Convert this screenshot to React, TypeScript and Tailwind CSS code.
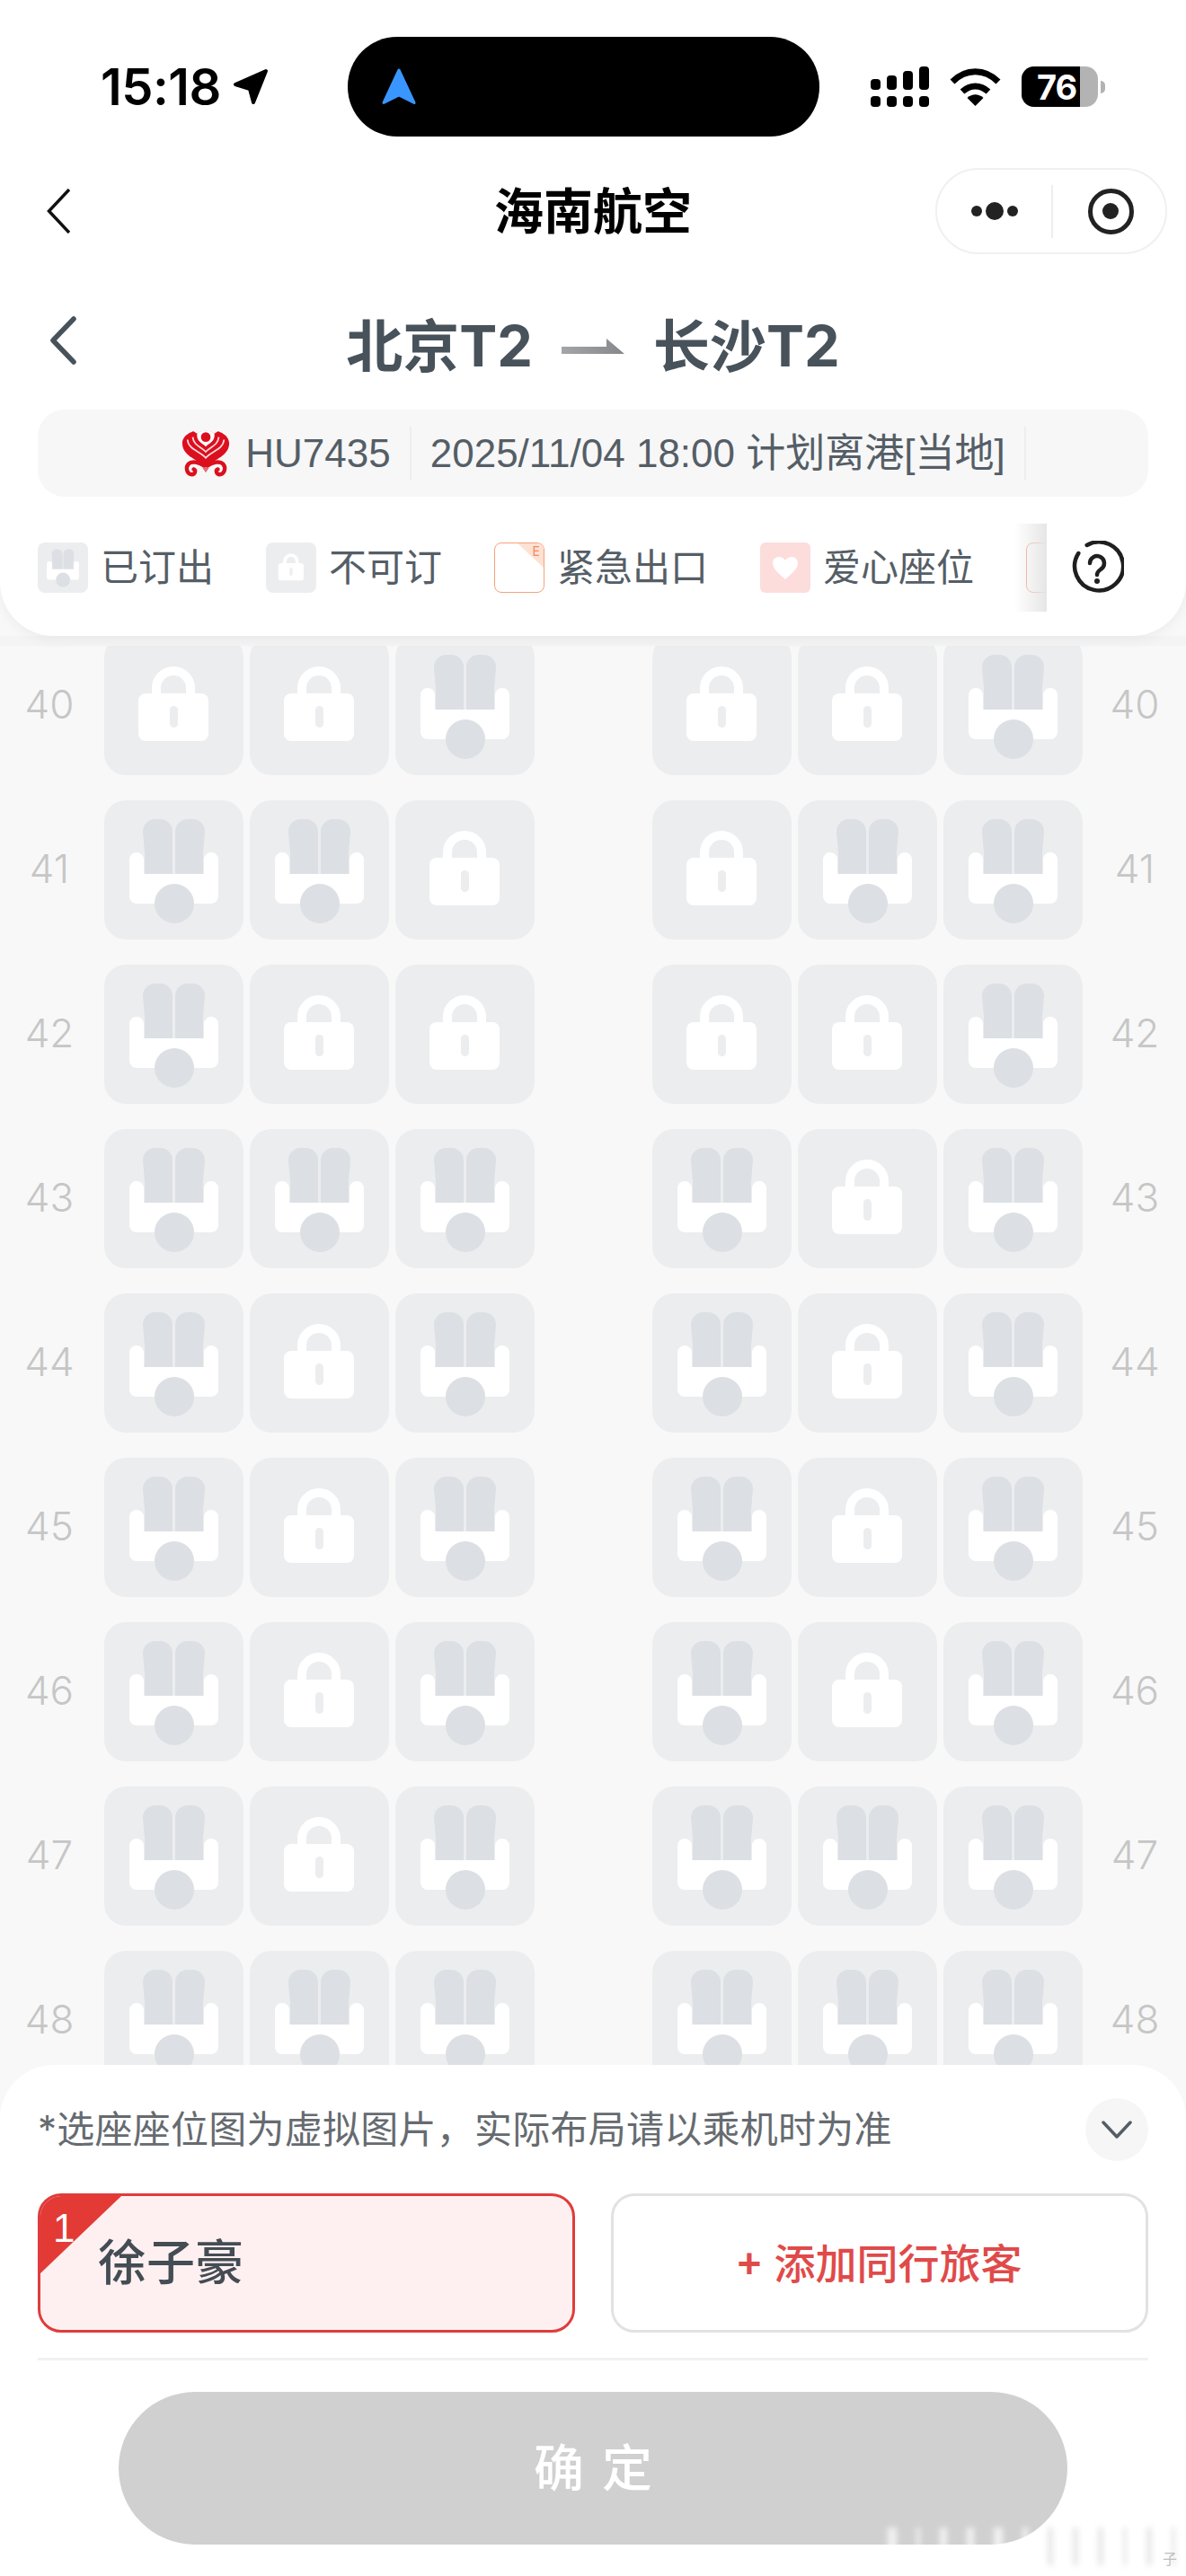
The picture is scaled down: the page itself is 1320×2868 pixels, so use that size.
import React from 'react';

type SeatKind = 'o' | 'l';

const ROWS: { label: string; left: SeatKind[]; right: SeatKind[] }[] = [
  { label: '40', left: ['l', 'l', 'o'], right: ['l', 'l', 'o'] },
  { label: '41', left: ['o', 'o', 'l'], right: ['l', 'o', 'o'] },
  { label: '42', left: ['o', 'l', 'l'], right: ['l', 'l', 'o'] },
  { label: '43', left: ['o', 'o', 'o'], right: ['o', 'l', 'o'] },
  { label: '44', left: ['o', 'l', 'o'], right: ['o', 'l', 'o'] },
  { label: '45', left: ['o', 'l', 'o'], right: ['o', 'l', 'o'] },
  { label: '46', left: ['o', 'l', 'o'], right: ['o', 'l', 'o'] },
  { label: '47', left: ['o', 'l', 'o'], right: ['o', 'o', 'o'] },
  { label: '48', left: ['o', 'o', 'o'], right: ['o', 'o', 'o'] },
];

const OccupiedIcon = () => (
  <svg viewBox="0 0 155 155" className="block w-full h-full">
    <path d="M43 35a14 14 0 0 1 14-14h5a14 14 0 0 1 14 14v47H45V58z" fill="#dcdfe3" />
    <path d="M79 35a14 14 0 0 1 14-14h5a14 14 0 0 1 14 14l-2 23v24H79z" fill="#dcdfe3" />
    <path d="M28 66a8 8 0 0 1 16 0v16h67V66a8 8 0 0 1 16 0v41a8 8 0 0 1-8 8H36a8 8 0 0 1-8-8z" fill="#fff" />
    <circle cx="78" cy="115" r="22" fill="#dcdfe3" />
  </svg>
);

const LockIcon = () => (
  <svg viewBox="0 0 155 155" className="block w-full h-full">
    <path d="M58 66V58a19 19 0 0 1 38 0v8" fill="none" stroke="#fff" strokeWidth="10" />
    <rect x="38" y="64" width="78" height="53" rx="8" fill="#fff" />
    <rect x="73" y="78" width="9" height="24" rx="4.5" fill="#ecedef" />
  </svg>
);

const Seat = ({ kind }: { kind: SeatKind }) => (
  <div className="w-[155px] h-[155px] shrink-0 rounded-[24px] bg-[#ecedef]">
    {kind === 'o' ? <OccupiedIcon /> : <LockIcon />}
  </div>
);

const HainanLogo = () => (
  <svg viewBox="10 6 60 60" className="w-[58px] h-[58px] shrink-0">
    <path d="M40 52C30 43 13 38 13 24 13 14 26 8 40 8 54 8 67 14 67 24 67 38 50 43 40 52Z" fill="#dc0f1e" />
    <path d="M19 20C20 32 34 33 40 41 46 33 60 32 61 20" fill="none" stroke="#fff" strokeWidth="1.800" opacity="0.85" />
    <path d="M25 17C26 27 35 28 40 34 45 28 54 27 55 17" fill="none" stroke="#fff" strokeWidth="1.800" opacity="0.85" />
    <path d="M30 13C29 22 36 24 40 28 44 24 51 22 50 13 46 8 34 8 30 13Z" fill="#fff" />
    <path d="M24 9C30 7 50 7 56 9L50 13C46 9 34 9 30 13Z" fill="#f7f7f8" />
    <circle cx="40" cy="17" r="5.500" fill="#dc0f1e" />
    <path d="M38 50C32 46 24 44 20 48 16 53 19 60 24 60 28 60 29 55 26 54" fill="none" stroke="#dc0f1e" strokeWidth="4.500" strokeLinecap="round" />
    <path d="M42 50C48 46 56 44 60 48 64 53 61 60 56 60 52 60 51 55 54 54" fill="none" stroke="#dc0f1e" strokeWidth="4.500" strokeLinecap="round" />
    <path d="M36 52L40 58 44 52Z" fill="#dc0f1e" opacity="0.6" />
  </svg>
);

const SmallDivider = () => <div className="w-[2px] h-[60px] bg-[#eeeeef] shrink-0" />;

const LegendLabel = ({ children }: { children: React.ReactNode }) => (
  <span className="text-[42px] leading-[56px] text-[#555e66] whitespace-nowrap">{children}</span>
);

export default function App() {
  return (
    <div className="w-[1320px] h-[2868px] overflow-hidden flex flex-col bg-[#f8f8f8] font-['Inter','Noto_Sans_CJK_SC',sans-serif]">
      {/* Header card */}
      <div className="relative z-20 h-[708px] shrink-0 bg-white rounded-b-[60px] shadow-[0_4px_14px_rgba(0,0,0,0.05)] pt-[41px]">
        {/* Status bar */}
        <div className="flex items-center h-[111px]">
          <span className="ml-[112px] w-[136px] text-[56px] leading-none font-semibold text-black tracking-[-0.5px]">15:18</span>
          <svg viewBox="0 0 40 41" className="ml-[11px] w-[40px] h-[41px]">
            <path d="M37 3L3 18l16 5 4 15z" fill="#000" stroke="#000" strokeWidth="4" strokeLinejoin="round" />
          </svg>
          <div className="ml-[88px] w-[525px] h-[111px] rounded-[55px] bg-black flex items-center pl-[38px]">
            <svg viewBox="0 0 38 41" className="w-[38px] h-[41px]">
              <path d="M19 2L2 38.500 19 30l17 8.500z" fill="#3a96ff" stroke="#3a96ff" strokeWidth="3" strokeLinejoin="round" />
            </svg>
          </div>
          <svg viewBox="0 0 65 45" className="ml-[57px] w-[65px] h-[45px]">
            <rect x="0" y="14" width="11" height="12" rx="4" />
            <rect x="18" y="10" width="11" height="16" rx="4" />
            <rect x="36" y="5" width="11" height="21" rx="4" />
            <rect x="54" y="0" width="11" height="26" rx="4" />
            <rect x="0" y="33" width="11" height="12" rx="4" />
            <rect x="18" y="33" width="11" height="12" rx="4" />
            <rect x="36" y="33" width="11" height="12" rx="4" />
            <rect x="54" y="33" width="11" height="12" rx="4" />
          </svg>
          <svg viewBox="0 0 57 42" className="ml-[23px] w-[57px] h-[42px]">
            <path d="M3 15C18 0 39 0 54 15" fill="none" stroke="#000" strokeWidth="7" />
            <path d="M14 26C23 18 34 18 43 26" fill="none" stroke="#000" strokeWidth="7" />
            <path d="M19.500 33C25 28 32 28 37.500 33L28.500 42Z" fill="#000" />
          </svg>
          <div className="relative ml-[23px] w-[85px] h-[45px] rounded-[14px] bg-[#b3b3b3] flex items-center pl-[17px]">
            <div className="absolute inset-y-0 left-0 w-[65px] rounded-l-[14px] bg-black" />
            <span className="relative text-[38px] leading-none font-bold text-white tracking-[-1px]">76</span>
          </div>
          <div className="ml-[3px] w-[5px] h-[14px] rounded-r-full bg-[#b3b3b3]" />
        </div>

        {/* Mini program nav */}
        <div className="mt-[35px] h-[96px] grid grid-cols-[1fr_auto_1fr] items-center">
          <svg viewBox="0 0 26 50" className="ml-[52px] w-[26px] h-[50px]">
            <path d="M25 1L2.500 25 25 49" fill="none" stroke="#111" strokeWidth="3.500" />
          </svg>
          <span className="text-[55px] leading-none font-semibold text-black">海南航空</span>
          <div className="justify-self-end mr-[21px] w-[258px] h-[96px] rounded-[48px] border-2 border-[#f0f0f0] flex items-center">
            <div className="w-[127px] flex items-center justify-center gap-[4px] pl-[1px]">
              <div className="w-[12px] h-[12px] rounded-full bg-[#222]" />
              <div className="w-[20px] h-[20px] rounded-full bg-[#222]" />
              <div className="w-[12px] h-[12px] rounded-full bg-[#222]" />
            </div>
            <div className="w-[2px] h-[59px] bg-[#eeeeee]" />
            <div className="flex-1 flex items-center justify-center pl-[3px]">
              <div className="w-[51px] h-[51px] rounded-full border-[5px] border-[#222] flex items-center justify-center">
                <div className="w-[18px] h-[18px] rounded-full bg-[#222]" />
              </div>
            </div>
          </div>
        </div>

        {/* Route */}
        <div className="mt-[62px] h-[80px] relative flex items-center justify-center gap-[32px] text-[#48525a]">
          <svg viewBox="0 0 30 54" className="absolute left-[55px] top-[7px] w-[30px] h-[54px]">
            <path d="M27 3L4 27l23 24" fill="none" stroke="#48525a" strokeWidth="5.500" strokeLinecap="round" strokeLinejoin="round" />
          </svg>
          <span className="text-[63px] leading-none font-bold">北京T2</span>
          <svg viewBox="0 0 70 17" className="w-[70px] h-[17px]">
            <defs>
              <linearGradient id="routeArrow" x1="0" x2="1" y1="0" y2="0">
                <stop offset="0" stopColor="#a3a5a8" />
                <stop offset="1" stopColor="#86888b" />
              </linearGradient>
            </defs>
            <path d="M0 9H50V0L70 17H0Z" fill="url(#routeArrow)" />
          </svg>
          <span className="text-[63px] leading-none font-bold">长沙T2</span>
        </div>

        {/* Flight info */}
        <div className="mt-[31px] mx-[42px] h-[97px] rounded-[30px] bg-[#f7f7f8] flex items-center justify-center gap-[21px] pl-[22px] text-[#555e66] text-[44px] leading-none font-['Liberation_Sans','Noto_Sans_CJK_SC',sans-serif]">
          <div className="flex items-center gap-[15px]">
            <HainanLogo />
            <span>HU7435</span>
          </div>
          <SmallDivider />
          <span className="whitespace-nowrap">2025/11/04 18:00 计划离港[当地]</span>
          <SmallDivider />
        </div>

        {/* Legend */}
        <div className="mt-[30px] h-[98px] flex items-center">
          <div className="relative w-[1165px] h-full overflow-hidden flex items-center gap-[58px] pl-[42px] shrink-0">
            <div className="flex items-center gap-[14px] shrink-0">
              <div className="w-[56px] h-[56px] rounded-[8px] bg-[#ecedef]">
                <OccupiedIcon />
              </div>
              <LegendLabel>已订出</LegendLabel>
            </div>
            <div className="flex items-center gap-[14px] shrink-0">
              <div className="w-[56px] h-[56px] rounded-[8px] bg-[#ecedef]">
                <LockIcon />
              </div>
              <LegendLabel>不可订</LegendLabel>
            </div>
            <div className="flex items-center gap-[14px] shrink-0">
              <div className="relative w-[56px] h-[56px] rounded-[8px] border-[1.5px] border-[#f5a27a] overflow-hidden bg-white">
                <svg viewBox="0 0 56 56" className="absolute inset-0 w-full h-full">
                  <path d="M26 0H56V28Z" fill="#fde2d4" />
                </svg>
                <span className="absolute right-[4px] top-[1px] text-[14px] leading-[16px] text-[#f58a5c]">E</span>
              </div>
              <LegendLabel>紧急出口</LegendLabel>
            </div>
            <div className="flex items-center gap-[14px] shrink-0">
              <div className="w-[56px] h-[56px] rounded-[6px] bg-[#fddcdc] flex items-center justify-center">
                <svg viewBox="0 0 28 25" className="w-[28px] h-[25px]">
                  <path d="M14 25C6 18 0 13 0 7 0 3 3 0 7 0c3 0 6 2 7 4 1-2 4-4 7-4 4 0 7 3 7 7 0 6-6 11-14 18Z" fill="#fff" />
                </svg>
              </div>
              <LegendLabel>爱心座位</LegendLabel>
            </div>
            <div className="w-[56px] h-[56px] rounded-[8px] border-[1.5px] border-[#f5a27a] bg-white shrink-0" />
            <div className="absolute inset-y-0 right-0 w-[36px] bg-gradient-to-r from-[#ffffff00] to-[#e6e6e6]" />
          </div>
          <svg viewBox="0 0 60 60" className="ml-[26px] w-[60px] h-[60px]">
            <path d="M18.700 5A27 27 0 1 1 9.300 14" fill="none" stroke="#1f1f1f" strokeWidth="4.500" strokeLinecap="round" />
            <path d="M22 25a8 8 0 1 1 12 7c-3 2-4 3-4 6" fill="none" stroke="#1f1f1f" strokeWidth="4.500" strokeLinecap="round" />
            <circle cx="30" cy="45" r="3" fill="#1f1f1f" />
          </svg>
        </div>
      </div>

      {/* Seat map */}
      <div className="relative z-0 flex-1 min-h-0 overflow-hidden flex flex-col gap-[28px]">
        <div className="absolute top-0 inset-x-0 h-[11px] bg-[#f4f4f4]" />
        {ROWS.map((row) => (
          <div key={row.label} className="flex items-center shrink-0 text-[44px] font-light text-[#c6c6c6]">
            <span className="w-[110px] text-center pb-[3px]">{row.label}</span>
            <div className="ml-[6px] flex gap-[7px]">
              {row.left.map((s, i) => (
                <Seat key={i} kind={s} />
              ))}
            </div>
            <div className="ml-[131px] flex gap-[7px]">
              {row.right.map((s, i) => (
                <Seat key={i} kind={s} />
              ))}
            </div>
            <span className="ml-[3px] w-[110px] text-center pb-[3px]">{row.label}</span>
          </div>
        ))}
      </div>

      {/* Bottom panel */}
      <div className="relative z-20 -mt-[60px] h-[569px] shrink-0 bg-white rounded-t-[60px] px-[42px] pt-[37px]">
        <div className="flex items-center justify-between h-[70px]">
          <span className="text-[42px] leading-none tracking-[0.25px] text-[#666b70] whitespace-nowrap">*选座座位图为虚拟图片，实际布局请以乘机时为准</span>
          <div className="w-[70px] h-[70px] rounded-full bg-[#f6f6f7] flex items-center justify-center">
            <svg viewBox="0 0 34 20" className="w-[34px] h-[20px]">
              <path d="M2 2l15 16L32 2" fill="none" stroke="#555e66" strokeWidth="3.500" strokeLinecap="round" strokeLinejoin="round" />
            </svg>
          </div>
        </div>

        <div className="mt-[36px] grid grid-cols-2 gap-[40px]">
          <div className="relative h-[155px] rounded-[26px] border-[3px] border-[#e03c3c] bg-[#fef0f0] overflow-hidden flex items-center pl-[64px]">
            <svg viewBox="0 0 90 86" className="absolute left-0 top-0 w-[90px] h-[86px]">
              <path d="M0 0H90L0 86Z" fill="#e33a36" />
            </svg>
            <span className="absolute left-[14px] top-[12px] text-[44px] leading-[48px] font-['Liberation_Sans',sans-serif] text-white">1</span>
            <span className="relative text-[54px] leading-none font-medium text-[#444c54]">徐子豪</span>
          </div>
          <div className="h-[155px] rounded-[26px] border-[3px] border-[#e2e2e2] bg-white flex items-center justify-center gap-[14px] text-[#e04a4a] font-medium">
            <span className="text-[46px] leading-none font-['Liberation_Sans',sans-serif] font-bold">+</span>
            <span className="text-[46px] leading-none">添加同行旅客</span>
          </div>
        </div>

        <div className="mt-[28px] h-[3px] bg-[#f1f1f1]" />

        <div className="mt-[35px] mx-[90px] h-[170px] rounded-full bg-[#d0d0d0] flex items-center justify-center">
          <span className="text-[56px] leading-none font-medium text-white tracking-[20px] pl-[20px] whitespace-nowrap">确定</span>
        </div>

        {/* Blurred watermark */}
        <div className="absolute right-[12px] bottom-[12px] w-[320px] h-[42px] flex items-stretch justify-between blur-[3px] opacity-70">
          {[10, 4, 8, 8, 10, 6, 6, 6, 6, 4, 6, 4].map((w, i) => (
            <div key={i} className={i < 6 ? 'bg-white' : 'bg-[#dddddd]'} style={{ width: w }} />
          ))}
        </div>
        <span className="absolute right-[10px] bottom-[11px] text-[16px] leading-none text-[#bdbdbd] blur-[0.5px]">子</span>
      </div>
    </div>
  );
}
